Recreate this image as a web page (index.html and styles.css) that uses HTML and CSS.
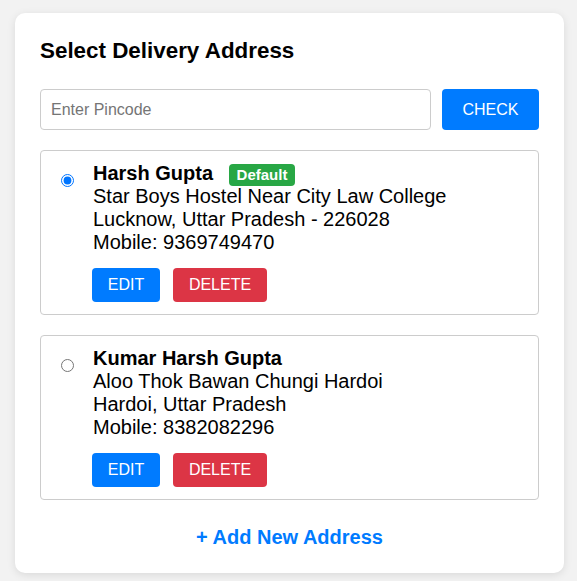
FILE: index.html
```html
<!DOCTYPE html>
<html>
<head>
<meta charset="utf-8">
<link rel="stylesheet" href="styles.css">
</head>
<body>
<div class="panel">
  <h2 class="title">Select Delivery Address</h2>
  <div class="pin-row">
    <input class="pin-input" type="text" placeholder="Enter Pincode">
    <button class="btn btn-blue check">CHECK</button>
  </div>
  <div class="addr">
    <input class="radio" type="radio" name="addr" checked>
    <div class="addr-body">
      <div class="name">Harsh Gupta <span class="badge">Default</span></div>
      <div class="line">Star Boys Hostel Near City Law College</div>
      <div class="line">Lucknow, Uttar Pradesh - 226028</div>
      <div class="line">Mobile: 9369749470</div>
      <div class="actions">
        <button class="btn btn-blue">EDIT</button>
        <button class="btn btn-red">DELETE</button>
      </div>
    </div>
  </div>
  <div class="addr">
    <input class="radio" type="radio" name="addr">
    <div class="addr-body">
      <div class="name">Kumar Harsh Gupta</div>
      <div class="line">Aloo Thok Bawan Chungi Hardoi</div>
      <div class="line">Hardoi, Uttar Pradesh</div>
      <div class="line">Mobile: 8382082296</div>
      <div class="actions">
        <button class="btn btn-blue">EDIT</button>
        <button class="btn btn-red">DELETE</button>
      </div>
    </div>
  </div>
  <div class="add-new">+ Add New Address</div>
</div>
</body>
</html>
```
FILE: styles.css
```css
html, body {
  margin: 0;
  padding: 0;
  background: #f2f2f2;
  font-family: "Liberation Sans", Arial, sans-serif;
}
body {
  padding: 13px 13px 8px 15px;
}
.panel {
  width: 499px;
  background: #fff;
  border-radius: 10px;
  box-shadow: 0 2px 8px rgba(0,0,0,0.1);
  padding: 25px 25px 24px 25px;
}
.title {
  margin: 0 0 25px 0;
  font-size: 22.4px;
  font-weight: bold;
  color: #000;
  line-height: normal;
}
.pin-row {
  display: flex;
  gap: 11px;
  margin-bottom: 20px;
}
.pin-input {
  flex: 1;
  height: 41px;
  box-sizing: border-box;
  border: 1px solid #ccc;
  border-radius: 4px;
  padding: 0 10px;
  font-family: "Liberation Sans", Arial, sans-serif;
  font-size: 16px;
  outline: none;
}
.pin-input::placeholder {
  color: #757575;
}
.btn {
  border: none;
  border-radius: 4px;
  color: #fff;
  font-family: "Liberation Sans", Arial, sans-serif;
  font-size: 16px;
  cursor: pointer;
  padding: 0;
  height: 34px;
}
.btn-blue { background: #007bff; }
.btn-red { background: #dc3545; }
.check {
  width: 97px;
  height: 41px;
}
.addr {
  display: flex;
  align-items: flex-start;
  border: 1px solid #ccc;
  border-radius: 4px;
  padding: 11px 15px 12px 15px;
  margin-bottom: 20px;
}
.radio {
  margin: 12px 18px 0 5px;
  width: 13px;
  height: 13px;
  flex: none;
}
.addr-body {
  display: flex;
  flex-direction: column;
}
.name {
  font-size: 20px;
  font-weight: bold;
  line-height: 23px;
  height: 23px;
  color: #000;
  padding-left: 1px;
}
.badge {
  display: inline-block;
  background: #28a745;
  color: #fff;
  font-size: 15px;
  font-weight: bold;
  border-radius: 4px;
  padding: 2px 8px;
  margin-left: 10px;
  line-height: 18px;
}
.line {
  font-size: 20px;
  line-height: 23px;
  color: #000;
  padding-left: 1px;
}
.actions {
  display: flex;
  gap: 13px;
  margin-top: 14px;
}
.actions .btn-blue { width: 68px; }
.actions .btn-red { width: 94px; }
.add-new {
  text-align: center;
  color: #007bff;
  font-size: 20px;
  font-weight: bold;
  line-height: 23px;
  margin-top: 26px;
}
```
